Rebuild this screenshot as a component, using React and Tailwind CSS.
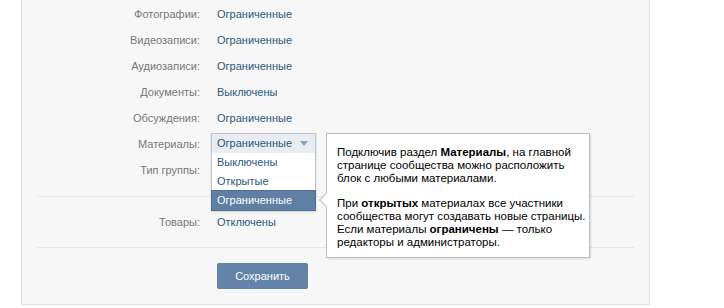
import React from "react";

const rows = [
  ["Фотографии:", "Ограниченные"],
  ["Видеозаписи:", "Ограниченные"],
  ["Аудиозаписи:", "Ограниченные"],
  ["Документы:", "Выключены"],
  ["Обсуждения:", "Ограниченные"],
];

function Row({ label, children }) {
  return (
    <div className="flex h-[26px] items-center">
      <div className="w-[178px] shrink-0 text-right text-[#777777]">{label}</div>
      <div className="ml-[17px] text-[#2b587a]">{children}</div>
    </div>
  );
}

export default function App() {
  return (
    <div className="min-h-screen bg-white font-['Liberation_Sans',sans-serif] text-[11px] leading-[13px]">
      <div className="ml-[21px] w-[629px] border-x border-b border-[#dde2e8] bg-[#f7f7f7] pt-px pb-[15px]">
        {rows.map(([l, v]) => (
          <Row key={l} label={l}>
            {v}
          </Row>
        ))}
        <div className="flex h-[26px] items-center">
          <div className="w-[178px] shrink-0 text-right text-[#777777]">Материалы:</div>
          <div className="relative ml-[11px] mt-[2px] h-[20px] w-[105px] self-start">
            <div className="absolute left-0 top-0 z-10 w-[105px] border border-[#b9c5d2] bg-white shadow-[0_1px_2px_rgba(0,0,0,0.15)]">
              <div className="flex h-[19px] items-center justify-between bg-[#e9edf1] pl-[5px] pr-[7px] text-[#2b587a]">
                <span>Ограниченные</span>
                <svg width="8" height="5" viewBox="0 0 8 5">
                  <path d="M0 0H8L4 5Z" fill="#8ea2b8" />
                </svg>
              </div>
              <div className="flex h-[19px] items-center pl-[5px] text-[#2b587a]">Выключены</div>
              <div className="flex h-[19px] items-center pl-[5px] text-[#2b587a]">Открытые</div>
              <div className="flex h-[19px] items-center bg-[#5f7fa5] pl-[5px] text-white outline outline-1 outline-[#4f6f96]">
                Ограниченные
              </div>
            </div>
            <div className="absolute left-[115px] top-0 z-10 h-[125px] w-[264px] whitespace-nowrap border border-[#b4bfcc] bg-white px-[10px] pt-[12px] text-[11.5px] text-black shadow-[1px_1px_2px_rgba(0,0,0,0.12)]">
              <div className="absolute left-[-6px] top-[61px] h-[10px] w-[10px] rotate-45 border-b border-l border-[#b4bfcc] bg-white" />
              <p>
                Подключив раздел <b>Материалы</b>, на главной
                <br />
                странице сообщества можно расположить
                <br />
                блок с любыми материалами.
              </p>
              <p className="mt-[12px]">
                При <b>открытых</b> материалах все участники
                <br />
                сообщества могут создавать новые страницы.
                <br />
                Если материалы <b>ограничены</b> — только
                <br />
                редакторы и администраторы.
              </p>
            </div>
          </div>
        </div>
        <Row label="Тип группы:">{""}</Row>
        <div className="mx-[15px] mt-[13px] border-t border-[#e2e5e9]" />
        <div className="mt-[12px]">
          <Row label="Товары:">Отключены</Row>
        </div>
        <div className="mx-[15px] mt-[12px] border-t border-[#e2e5e9]" />
        <div className="mt-[15px] pl-[195px]">
          <button className="h-[26px] w-[91px] rounded-[2px] bg-[#6383a8] text-white">Сохранить</button>
        </div>
      </div>
    </div>
  );
}
